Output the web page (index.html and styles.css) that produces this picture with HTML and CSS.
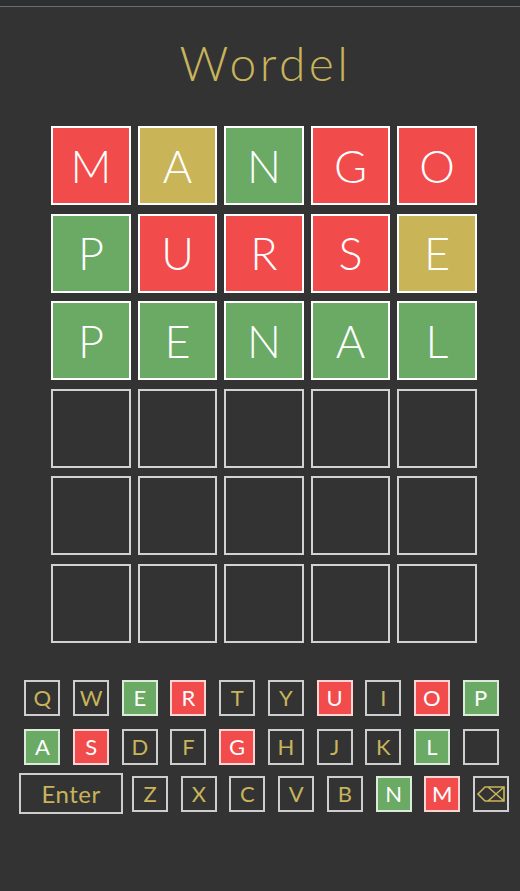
FILE: index.html
```html
<!DOCTYPE html>
<html lang="en">
<head>
<meta charset="utf-8">
<title>Wordel</title>
<link rel="stylesheet" href="styles.css">
</head>
<body>
<div class="topbar"></div>
<main class="app">
  <h1 class="title">Wordel</h1>
  <div class="board">
    <div class="row">
      <div class="tile absent">M</div>
      <div class="tile present">A</div>
      <div class="tile correct">N</div>
      <div class="tile absent">G</div>
      <div class="tile absent">O</div>
    </div>
    <div class="row">
      <div class="tile correct">P</div>
      <div class="tile absent">U</div>
      <div class="tile absent">R</div>
      <div class="tile absent">S</div>
      <div class="tile present">E</div>
    </div>
    <div class="row">
      <div class="tile correct">P</div>
      <div class="tile correct">E</div>
      <div class="tile correct">N</div>
      <div class="tile correct">A</div>
      <div class="tile correct">L</div>
    </div>
    <div class="row">
      <div class="tile empty"></div><div class="tile empty"></div><div class="tile empty"></div><div class="tile empty"></div><div class="tile empty"></div>
    </div>
    <div class="row">
      <div class="tile empty"></div><div class="tile empty"></div><div class="tile empty"></div><div class="tile empty"></div><div class="tile empty"></div>
    </div>
    <div class="row">
      <div class="tile empty"></div><div class="tile empty"></div><div class="tile empty"></div><div class="tile empty"></div><div class="tile empty"></div>
    </div>
  </div>
  <div class="keyboard">
    <div class="krow krow-shift">
      <div class="key">Q</div>
      <div class="key">W</div>
      <div class="key k-correct">E</div>
      <div class="key k-absent">R</div>
      <div class="key">T</div>
      <div class="key">Y</div>
      <div class="key k-absent">U</div>
      <div class="key">I</div>
      <div class="key k-absent">O</div>
      <div class="key k-correct">P</div>
    </div>
    <div class="krow krow-shift">
      <div class="key k-correct">A</div>
      <div class="key k-absent">S</div>
      <div class="key">D</div>
      <div class="key">F</div>
      <div class="key k-absent">G</div>
      <div class="key">H</div>
      <div class="key">J</div>
      <div class="key">K</div>
      <div class="key k-correct">L</div>
      <div class="key"></div>
    </div>
    <div class="krow krow-last">
      <div class="key key-enter">Enter</div>
      <div class="key">Z</div>
      <div class="key">X</div>
      <div class="key">C</div>
      <div class="key">V</div>
      <div class="key">B</div>
      <div class="key k-correct">N</div>
      <div class="key k-absent">M</div>
      <div class="key key-back">
        <svg class="back-icon" width="28" height="16" viewBox="0 0 28 16" aria-hidden="true">
          <path d="M1 8 L8 1 H27 V15 H8 Z M11 1 L27 15 M27 1 L11 15" fill="none" stroke="#c8b45b" stroke-width="1.6" stroke-linejoin="miter"/>
        </svg>
      </div>
    </div>
  </div>
</main>
</body>
</html>
```
FILE: styles.css
```css
html, body {
  margin: 0;
  padding: 0;
  background: #333333;
}

body {
  font-family: "Lato", "Open Sans", sans-serif;
  min-height: 891px;
}

.topbar {
  height: 6px;
  background: #2e2f33;
  border-bottom: 1px solid #6d6d6d;
}

.app {
  padding-left: 8px;
  display: flex;
  flex-direction: column;
  align-items: center;
}

.title {
  margin: 27px 0 0;
  padding-left: 3px;
  height: 58px;
  line-height: 58px;
  font-size: 48px;
  font-weight: 300;
  letter-spacing: 3.5px;
  color: #c8b45b;
}

.board {
  margin-top: 34px;
  display: flex;
  flex-direction: column;
  gap: 8.6px;
}

.row {
  display: flex;
  gap: 7px;
}

.tile {
  box-sizing: border-box;
  width: 79.5px;
  height: 79px;
  border: 2px solid #ffffff;
  display: flex;
  align-items: center;
  justify-content: center;
  font-size: 45px;
  font-weight: 300;
  color: #ffffff;
}

.tile.empty {
  border-color: #d2d2d2;
}

.absent { background: #f24b4b; }
.present { background: #c9b458; }
.correct { background: #6aaa64; }

.keyboard {
  margin-top: 37px;
  display: flex;
  flex-direction: column;
  align-items: center;
  gap: 12.6px;
}

.krow {
  display: flex;
  gap: 12.7px;
  align-items: center;
}

.krow-shift {
  padding-right: 5px;
}

.krow-last {
  margin-top: -4px;
}

.key {
  box-sizing: border-box;
  width: 36px;
  height: 36px;
  border: 2px solid rgba(255, 255, 255, 0.76);
  display: flex;
  align-items: center;
  justify-content: center;
  font-size: 22px;
  color: #c8b45b;
}

.k-absent { background: #f24b4b; color: #ffffff; }
.k-correct { background: #6aaa64; color: #ffffff; }

.key-enter {
  width: 104px;
  height: 41px;
  font-size: 24px;
  letter-spacing: 0.5px;
  margin-right: -3.7px;
}

.back-icon {
  display: block;
}
```
